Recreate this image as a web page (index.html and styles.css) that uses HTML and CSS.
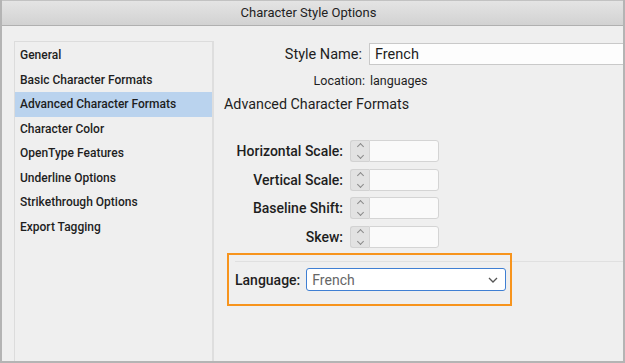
FILE: index.html
```html
<!DOCTYPE html>
<html lang="en">
  <head>
    <meta charset="UTF-8" />
    <meta name="viewport" content="width=device-width, initial-scale=1.0" />
    <title>Character Style Options</title>
    <link rel="stylesheet" href="styles.css">
  </head>
  <body>
    <div class="window">
      <div class="titlebar">Character Style Options</div>

      <div class="dialog-body">
        <ul class="sidebar">
          <li>General</li>
          <li>Basic Character Formats</li>
          <li class="selected">Advanced Character Formats</li>
          <li>Character Color</li>
          <li>OpenType Features</li>
          <li>Underline Options</li>
          <li>Strikethrough Options</li>
          <li>Export Tagging</li>
        </ul>

        <div class="main">
          <div class="name-row">
            <label for="styleName">Style Name:</label>
            <input id="styleName" type="text" value="French" />
          </div>
          <div class="location-row">
            <span class="location-label">Location:</span>
            <span>languages</span>
          </div>

          <h2>Advanced Character Formats</h2>

          <div class="spinners">
            <div class="spin-row">
              <label>Horizontal Scale:</label>
              <span class="stepper"><span class="up"></span><span class="down"></span></span>
              <span class="spin-field"></span>
            </div>
            <div class="spin-row">
              <label>Vertical Scale:</label>
              <span class="stepper"><span class="up"></span><span class="down"></span></span>
              <span class="spin-field"></span>
            </div>
            <div class="spin-row">
              <label>Baseline Shift:</label>
              <span class="stepper"><span class="up"></span><span class="down"></span></span>
              <span class="spin-field"></span>
            </div>
            <div class="spin-row">
              <label>Skew:</label>
              <span class="stepper"><span class="up"></span><span class="down"></span></span>
              <span class="spin-field"></span>
            </div>
          </div>

          <div class="language-section">
            <div class="language-row">
              <label>Language:</label>
              <div class="select">
                <span>French</span>
                <svg width="10" height="6" viewBox="0 0 10 6">
                  <path d="M1 1 L5 5 L9 1" fill="none" stroke="#555" stroke-width="1.3" />
                </svg>
              </div>
            </div>
            <div class="highlight"></div>
          </div>
        </div>
      </div>
    </div>
  </body>
</html>
```

FILE: styles.css
```css
body {
  margin: 0;
  padding: 0;
  font-family: Roboto, "Liberation Sans", sans-serif;
  color: #1e1e1e;
  overflow: hidden;
}

.window {
  width: 625px;
  height: 363px;
  box-sizing: border-box;
  background-color: #efefef;
  border-left: 2px solid #b4b4b4;
  border-right: 2px solid #b4b4b4;
  border-bottom: 2px solid #b4b4b4;
  overflow: hidden;
}

.titlebar {
  height: 24px;
  line-height: 24px;
  text-align: center;
  font-size: 13px;
  color: #222;
  padding-right: 8px;
  background: linear-gradient(#e4e4e4, #d2d2d2);
  border-top: 1px solid #c2c2c2;
  border-bottom: 1px solid #b0b0b0;
}

.dialog-body {
  display: flex;
  padding: 15px 0 0 12px;
  height: 320px;
}

.sidebar {
  list-style: none;
  margin: 0;
  padding: 1px 0 0;
  width: 197px;
  flex-shrink: 0;
  border: 1px solid #dcdcdc;
  border-right: 2px solid #dedede;
  border-bottom: none;
}

.sidebar li {
  height: 24.5px;
  line-height: 24.5px;
  padding-left: 5px;
  font-size: 12px;
  font-weight: 500;
  white-space: nowrap;
}

.sidebar li.selected {
  background-color: #bad3ee;
}

.main {
  flex: 1;
  padding: 2px 0 0 10px;
  position: relative;
  white-space: nowrap;
}

.name-row {
  display: flex;
  align-items: center;
  gap: 7px;
}

.name-row label {
  width: 138px;
  flex-shrink: 0;
  text-align: right;
  font-size: 14.5px;
}

.name-row input {
  width: 300px;
  flex-shrink: 0;
  height: 22px;
  box-sizing: border-box;
  border: 1px solid #c9c9c9;
  background-color: #fdfdfd;
  padding: 0 5px;
  font-family: inherit;
  font-size: 14.5px;
  color: #1e1e1e;
  outline: none;
}

.location-row {
  display: flex;
  gap: 5px;
  margin-top: 8px;
  height: 16px;
  line-height: 16px;
  font-size: 12.5px;
}

.location-label {
  width: 141px;
  text-align: right;
}

h2 {
  margin: 6px 0 0;
  font-size: 14.3px;
  font-weight: 400;
  height: 18px;
  line-height: 18px;
}

.spinners {
  margin-top: 27px;
  display: flex;
  flex-direction: column;
  gap: 6.5px;
}

.spin-row {
  display: flex;
  align-items: center;
  height: 22px;
}

.spin-row label {
  width: 119px;
  text-align: right;
  font-size: 14px;
  font-weight: 500;
  margin-right: 7px;
}

.stepper {
  width: 19px;
  height: 22px;
  box-sizing: border-box;
  background-color: #e2e2e2;
  border: 1px solid #d2d2d2;
  border-right: none;
  border-radius: 3px 0 0 3px;
  display: flex;
  flex-direction: column;
  align-items: center;
  justify-content: center;
  gap: 4px;
}

.stepper span {
  width: 4px;
  height: 4px;
  border-left: 1px solid #8a8a8a;
  border-top: 1px solid #8a8a8a;
}

.stepper .up {
  transform: rotate(45deg);
  margin-top: 3px;
}

.stepper .down {
  transform: rotate(-135deg);
  margin-bottom: 3px;
}

.spin-field {
  width: 70px;
  height: 22px;
  box-sizing: border-box;
  background-color: #fafafa;
  border: 1px solid #d4d4d4;
  border-radius: 0 3px 3px 0;
}

.language-section {
  margin-top: 13.5px;
  border-top: 1px solid #e0e0e0;
  margin-left: 11px;
  position: relative;
}

.language-row {
  display: flex;
  align-items: center;
  gap: 6px;
  margin-top: 6px;
}

.language-row label {
  font-size: 14px;
  font-weight: 500;
}

.select {
  width: 200px;
  height: 23px;
  box-sizing: border-box;
  border: 1px solid #3f7fd3;
  border-radius: 3px;
  background-color: #fff;
  display: flex;
  align-items: center;
  justify-content: space-between;
  padding: 0 7px 0 5px;
  font-size: 14px;
  color: #666;
}

.highlight {
  position: absolute;
  left: -8px;
  top: -9px;
  width: 285px;
  height: 53px;
  box-sizing: border-box;
  border: 2px solid #f7941d;
}
```
